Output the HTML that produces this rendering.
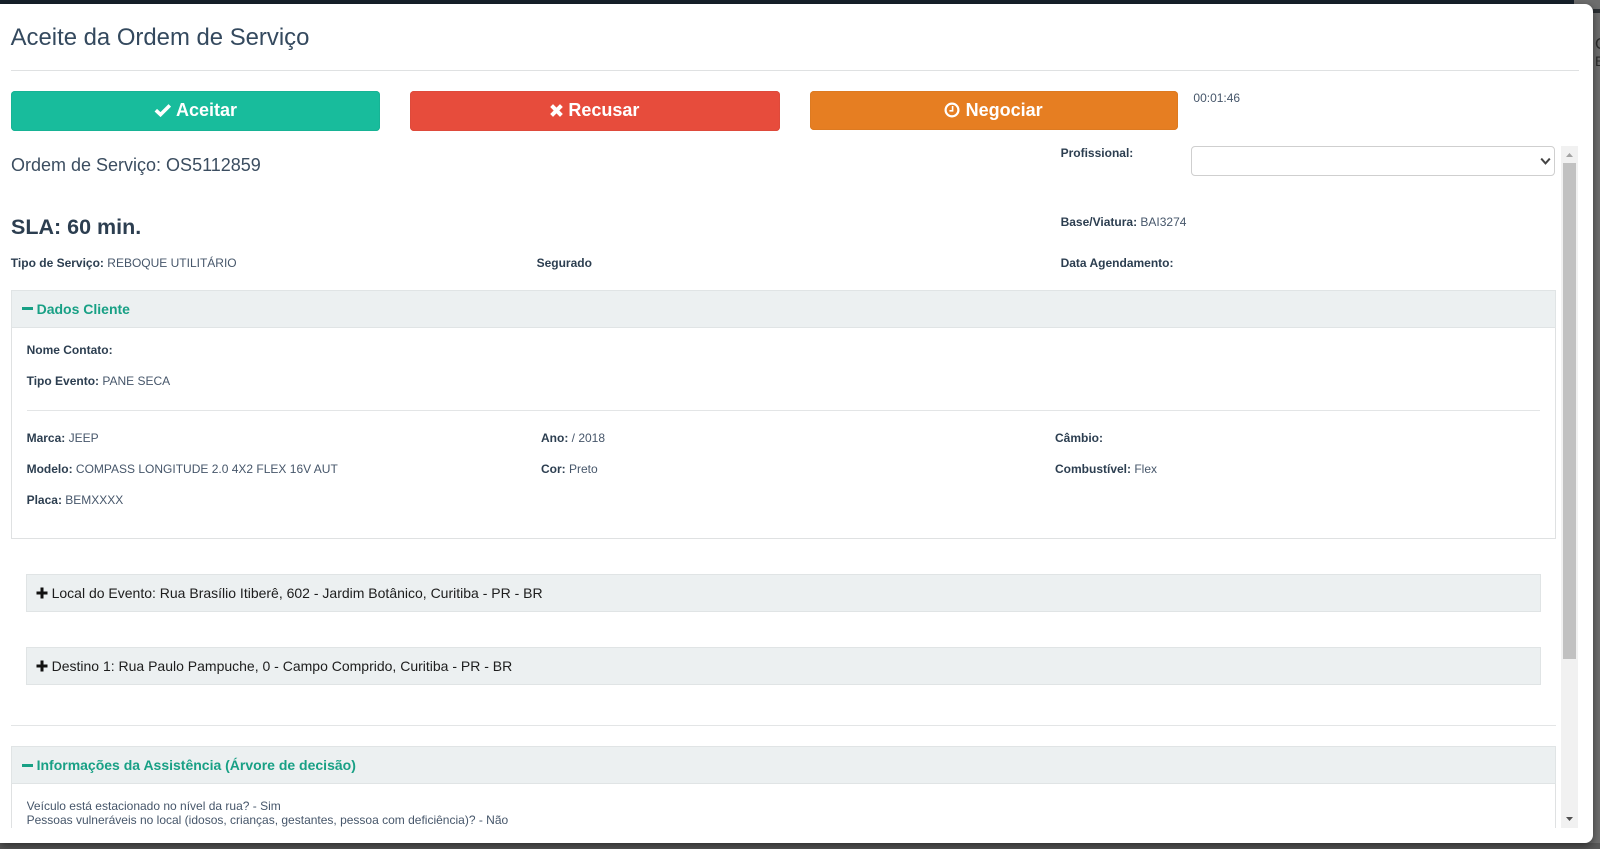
<!DOCTYPE html>
<html lang="pt-BR">
<head>
<meta charset="utf-8">
<title>Aceite da Ordem de Serviço</title>
<style>
html,body{margin:0;padding:0;width:1600px;height:849px;overflow:hidden;background:#5c5c5c;}
body{position:relative;font-family:"Liberation Sans",sans-serif;color:#2c3e50;}
.a{position:absolute;white-space:nowrap;}
.t{position:absolute;white-space:nowrap;font-size:12px;line-height:20px;height:20px;color:#46566a;}
.t b{font-weight:700;color:#2c3e50;}
#modal{position:absolute;left:0;top:4px;width:1593px;height:839px;background:#fff;border-radius:0 8px 8px 0;box-shadow:0 3px 9px rgba(0,0,0,.5);}
#layer{position:absolute;left:0;top:0;width:1600px;height:849px;}
.btn{position:absolute;top:91px;height:40px;border-radius:4px;}
.btxt{position:absolute;top:99px;line-height:22px;font-size:18px;font-weight:700;color:#fff;white-space:nowrap;}
.head{position:absolute;background:#ecf0f1;border:1px solid #e0e4e5;box-sizing:border-box;}
.green{position:absolute;font-size:14px;font-weight:700;color:#18a085;line-height:20px;white-space:nowrap;}
.dark{position:absolute;font-size:14px;color:#1d1d1d;line-height:20px;white-space:nowrap;}
.hr{position:absolute;height:1px;background:#e3e5e6;}
</style>
</head>
<body>
<div class="a" style="left:0;top:0;width:1574px;height:4px;background:#17212b"></div>
<div class="a" style="left:1574px;top:0;width:26px;height:849px;background:#6e6e6e"></div>
<div class="a" style="left:1593px;top:9px;width:7px;height:4px;background:#2b2f33"></div>
<div class="a" style="left:1595px;top:36px;font-size:16px;line-height:18px;color:#2a2a2a">C</div>
<div class="a" style="left:1595px;top:53px;font-size:14px;line-height:16px;color:#2a2a2a">ES</div>
<div class="a" style="left:0;top:843px;width:1600px;height:6px;background:#585858"></div>

<div id="modal"></div>
<div id="layer">
  <div class="a" style="left:10.6px;top:23px;font-size:23.9px;line-height:30px;color:#34495e">Aceite da Ordem de Serviço</div>
  <div class="hr" style="left:11px;top:70px;width:1568px;background:#dfe1e2"></div>

  <div class="btn" style="left:11px;width:369px;background:#18bc9c;box-shadow:inset 0 0 0 1px #17b395"></div>
  <div class="btn" style="left:410px;width:370px;background:#e74c3c;box-shadow:inset 0 0 0 1px #de4a3b"></div>
  <div class="btn" style="left:809.5px;width:368.5px;height:39px;background:#e67e22;box-shadow:inset 0 0 0 1px #dd7a21"></div>

  <svg class="a" style="left:154px;top:103px" width="18" height="14" viewBox="0 0 18 14"><path d="M1.8 7.2 L6.5 11.6 L15.8 2.4" fill="none" stroke="#fff" stroke-width="3.6"/></svg>
  <div class="btxt" style="left:176px">Aceitar</div>
  <svg class="a" style="left:549px;top:103px" width="15" height="15" viewBox="0 0 15 15"><path d="M2.6 2.6 L12.4 12.4 M12.4 2.6 L2.6 12.4" fill="none" stroke="#fff" stroke-width="4"/></svg>
  <div class="btxt" style="left:568.4px">Recusar</div>
  <svg class="a" style="left:944px;top:102px" width="16" height="16" viewBox="0 0 16 16"><circle cx="8" cy="8" r="6.4" fill="none" stroke="#fff" stroke-width="2.2"/><path d="M8.6 4 V8.8 H5.4" fill="none" stroke="#fff" stroke-width="1.6"/></svg>
  <div class="btxt" style="left:965.6px">Negociar</div>

  <div class="t" style="left:1193.4px;top:88px">00:01:46</div>

  <div class="a" style="left:11px;top:154px;font-size:18px;line-height:22px;color:#3b4d60">Ordem de Serviço: OS5112859</div>
  <div class="a" style="left:11px;top:214px;font-size:21.5px;line-height:26px;font-weight:700">SLA: 60 min.</div>

  <div class="t" style="left:1060.6px;top:143px"><b>Profissional:</b></div>
  <div class="a" style="left:1191px;top:146px;width:364px;height:30px;box-sizing:border-box;border:1px solid #cfcfcf;border-radius:4px;background:#fff"></div>
  <svg class="a" style="left:1540px;top:157px" width="11" height="9" viewBox="0 0 11 9"><path d="M1.2 1.6 L5.5 6.4 L9.8 1.6" fill="none" stroke="#444" stroke-width="2"/></svg>

  <div class="t" style="left:1060.6px;top:212px"><b>Base/Viatura:</b> BAI3274</div>
  <div class="t" style="left:10.8px;top:253px"><b>Tipo de Serviço:</b> REBOQUE UTILITÁRIO</div>
  <div class="t" style="left:536.6px;top:253px"><b>Segurado</b></div>
  <div class="t" style="left:1060.6px;top:253px"><b>Data Agendamento:</b></div>

  <!-- Panel 1 -->
  <div class="a" style="left:11px;top:290px;width:1545px;height:249px;box-sizing:border-box;border:1px solid #dfe1e2"></div>
  <div class="head" style="left:11px;top:290px;width:1545px;height:38px"></div>
  <div class="a" style="left:21.5px;top:307px;width:11px;height:3px;background:#18a085"></div>
  <div class="green" style="left:36.6px;top:299px">Dados Cliente</div>

  <div class="t" style="left:26.6px;top:340px"><b>Nome Contato:</b></div>
  <div class="t" style="left:26.6px;top:371px"><b>Tipo Evento:</b> PANE SECA</div>
  <div class="hr" style="left:27px;top:410px;width:1513px"></div>
  <div class="t" style="left:26.6px;top:428px"><b>Marca:</b> JEEP</div>
  <div class="t" style="left:541px;top:428px"><b>Ano:</b> / 2018</div>
  <div class="t" style="left:1055px;top:428px"><b>Câmbio:</b></div>
  <div class="t" style="left:26.6px;top:459px"><b>Modelo:</b> COMPASS LONGITUDE 2.0 4X2 FLEX 16V AUT</div>
  <div class="t" style="left:541px;top:459px"><b>Cor:</b> Preto</div>
  <div class="t" style="left:1055px;top:459px"><b>Combustível:</b> Flex</div>
  <div class="t" style="left:26.6px;top:490px"><b>Placa:</b> BEMXXXX</div>

  <!-- Collapsed bars -->
  <div class="head" style="left:26px;top:574px;width:1515px;height:38px"></div>
  <svg class="a" style="left:36px;top:587px" width="12" height="12" viewBox="0 0 12 12"><path d="M6 .5 V11.5 M.5 6 H11.5" stroke="#111" stroke-width="3"/></svg>
  <div class="dark" style="left:51.6px;top:583px">Local do Evento: Rua Brasílio Itiberê, 602 - Jardim Botânico, Curitiba - PR - BR</div>

  <div class="head" style="left:26px;top:647px;width:1515px;height:38px"></div>
  <svg class="a" style="left:36px;top:660px" width="12" height="12" viewBox="0 0 12 12"><path d="M6 .5 V11.5 M.5 6 H11.5" stroke="#111" stroke-width="3"/></svg>
  <div class="dark" style="left:51.6px;top:656px">Destino 1: Rua Paulo Pampuche, 0 - Campo Comprido, Curitiba - PR - BR</div>

  <div class="hr" style="left:11px;top:725px;width:1545px"></div>

  <!-- Panel 2 -->
  <div class="a" style="left:11px;top:746px;width:1545px;height:82px;box-sizing:border-box;border:1px solid #dfe1e2;border-bottom:0"></div>
  <div class="head" style="left:11px;top:746px;width:1545px;height:38px"></div>
  <div class="a" style="left:21.5px;top:764px;width:11px;height:3px;background:#18a085"></div>
  <div class="green" style="left:36.6px;top:755px">Informações da Assistência (Árvore de decisão)</div>
  <div class="a" style="left:26.6px;top:799px;width:1500px;height:29px;overflow:hidden;font-size:12px;line-height:14px;color:#46566a">Veículo está estacionado no nível da rua? - Sim<br>Pessoas vulneráveis no local (idosos, crianças, gestantes, pessoa com deficiência)? - Não</div>

  <!-- Scrollbar -->
  <div class="a" style="left:1561px;top:146px;width:17px;height:682px;background:#f1f1f1"></div>
  <div class="a" style="left:1563px;top:163px;width:13px;height:496px;background:#c1c1c1"></div>
  <svg class="a" style="left:1565px;top:152px" width="9" height="6" viewBox="0 0 9 6"><path d="M4.5 1 L8 5 H1 Z" fill="#a3a3a3"/></svg>
  <svg class="a" style="left:1565px;top:816px" width="9" height="6" viewBox="0 0 9 6"><path d="M1 1 H8 L4.5 5 Z" fill="#505050"/></svg>
</div>
</body>
</html>
